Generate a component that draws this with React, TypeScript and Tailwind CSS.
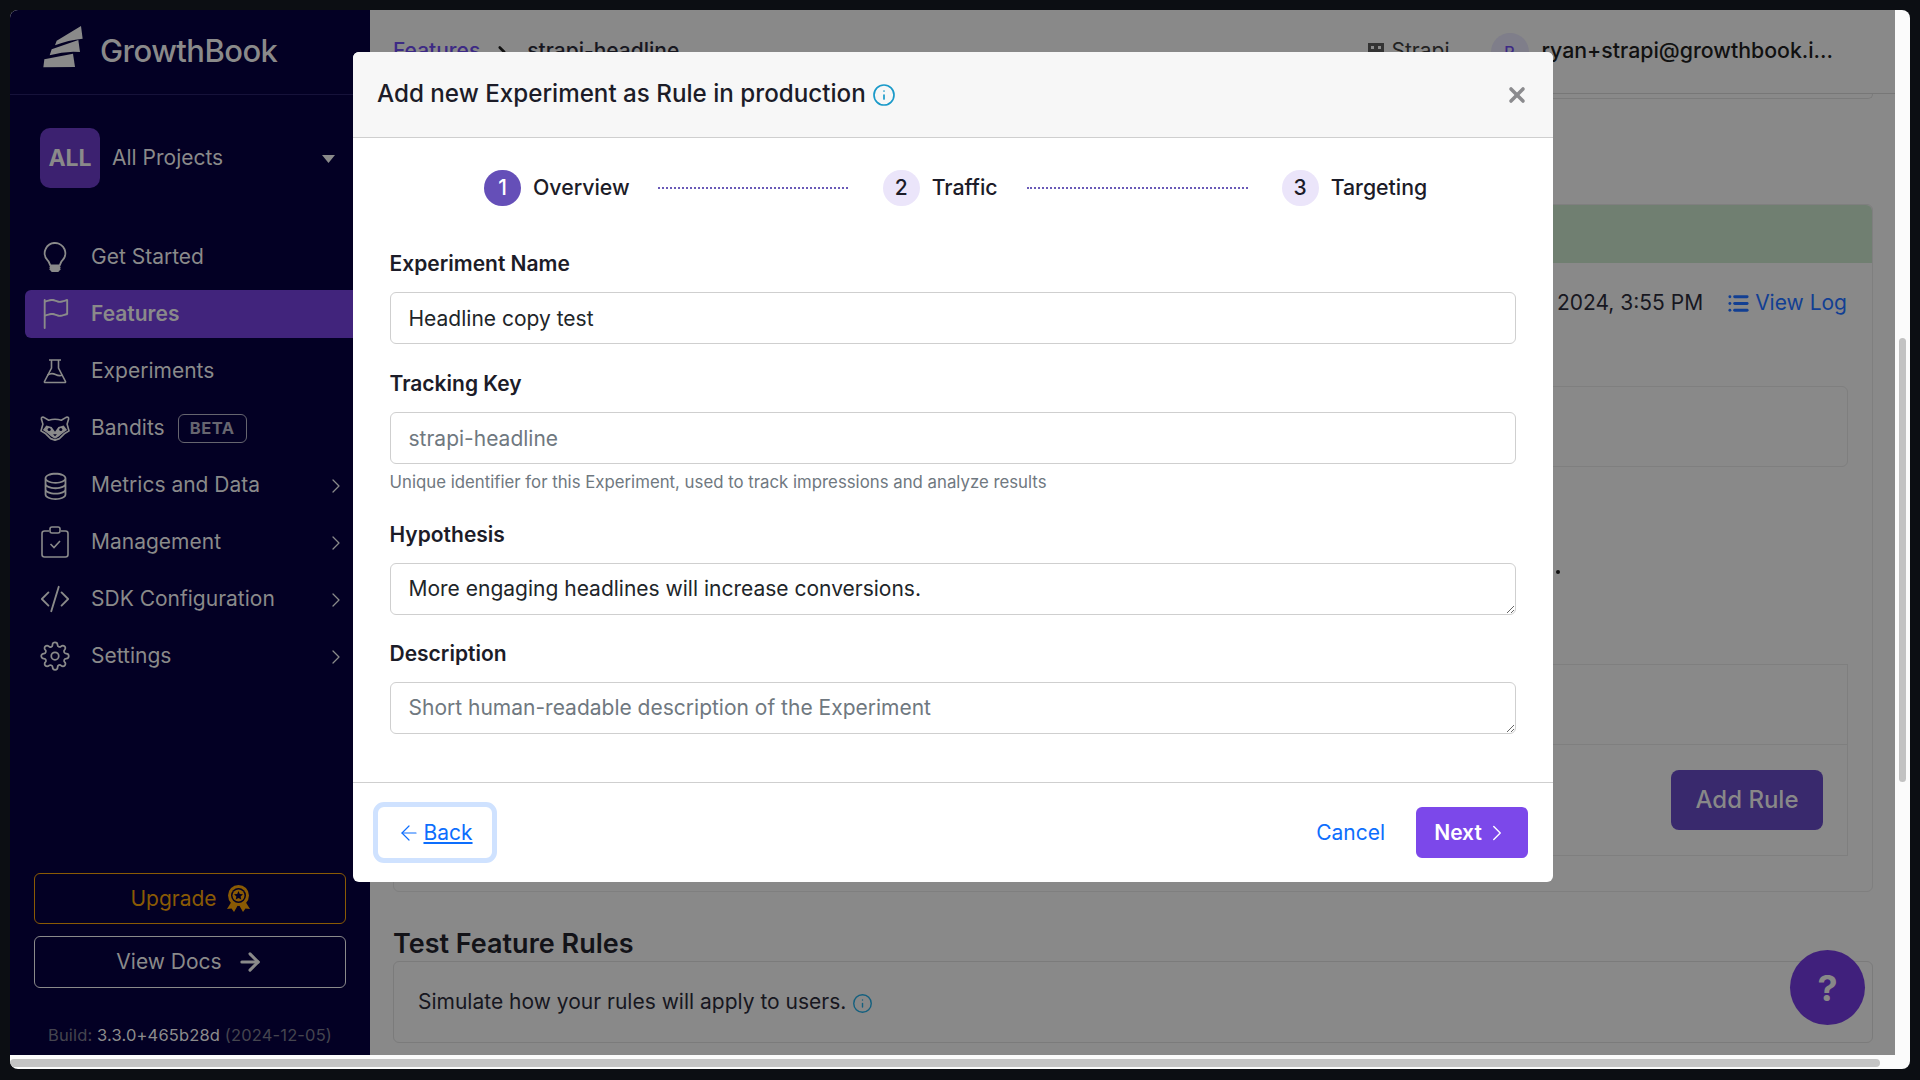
import React from "react";
import { ChevronRight, Info, X, ArrowLeft, ArrowRight, List } from "lucide-react";
import { BsLightbulb, BsFlag, BsDatabase, BsCodeSlash } from "react-icons/bs";
import { FiSettings } from "react-icons/fi";

const font = { fontFamily: "Inter, 'Liberation Sans', sans-serif" };

function Logo() {
  return (
    <svg width="60" height="55" viewBox="0 0 180 165" fill="#8a8a8a" className="shrink-0 -mt-[9px]">
      <path d="M60 76 L65 62 L138 18 L143 56 Q100 60 60 76 Z" />
      <path d="M44 106 L50 88 L130 60 L135 96 Q90 92 44 106 Z" />
      <path d="M25 142 L28 118 L114 101 L120 141 Z" />
    </svg>
  );
}

function Flask() {
  return (
    <svg width="26" height="26" viewBox="0 0 26 26" fill="none" stroke="#8a8a8a" strokeWidth="1.6">
      <path d="M7 2h12M9.500 2v8L2.500 23.500q-.4 1 .8 1h19.400q1.200 0 .8-1L16.500 10V2" />
      <path d="M5.500 17q4-2.500 8-.5t7 .5" />
    </svg>
  );
}

function Raccoon() {
  return (
    <svg width="31" height="26" viewBox="7 9 31 26" fill="none" stroke="#8a8a8a" strokeWidth="1.7">
      <path d="M11 11Q8 10 8.500 13L10 18L8 25L13 28L18 33L22.500 34.500L27 33L32 28L37 25L35 18L36.500 13Q37 10 34 11L29 14Q22.500 12 16 14Z" strokeLinejoin="round" />
      <path stroke="none" fill="#8a8a8a" d="M10 24L13.500 19.500L19 21L22.500 26L26 21L31.500 19.500L35 24L31 27L26 31L22.500 33L19 31L14 27Z" />
      <circle stroke="none" fill="#030024" cx="16.500" cy="23.500" r="1.600" />
      <circle stroke="none" fill="#030024" cx="28.500" cy="23.500" r="1.600" />
      <path stroke="none" fill="#030024" d="M20.500 28.500h4l-2 2z" />
    </svg>
  );
}

function Clipboard() {
  return (
    <svg width="28" height="32" viewBox="0 0 28 32" fill="none" stroke="#8a8a8a" strokeWidth="1.6">
      <path d="M8 5H3.500Q1 5 1 7.500v21Q1 31 3.500 31h21q2.500 0 2.500-2.500v-21Q27 5 24.500 5H20" />
      <rect x="9" y="1" width="10" height="6" rx="2" />
      <path d="M9.500 18l3.500 3.500 6-6.500" />
    </svg>
  );
}

function Ribbon() {
  return (
    <svg width="23" height="27" viewBox="0 0 23 27" fill="#8a5a04">
      <path d="M5 16L0 24l4.500-.5L7 27l4-7zM18 16l5 8-4.500-.5L16 27l-4-7z" />
      <circle cx="11.500" cy="10.500" r="10.500" />
      <circle cx="11.500" cy="10.500" r="7.500" fill="#030024" />
      <circle cx="11.500" cy="10.500" r="6" />
      <path fill="#030024" d="M11.500 6l1.300 3 3.200.3-2.400 2.100.7 3.100-2.800-1.600-2.800 1.600.7-3.100L7 9.300l3.200-.3z" />
    </svg>
  );
}

function NavItem({ icon, label, active, chevron, badge }: { icon: React.ReactNode; label: string; active?: boolean; chevron?: boolean; badge?: boolean }) {
  return (
    <div className={`flex items-center h-12 ml-[15px] pl-[15px] pr-[22px] rounded-l-md ${active ? "bg-[#41247c] font-semibold" : ""}`}>
      <span className="w-[30px] flex justify-center shrink-0 text-[#8a8a8a]">{icon}</span>
      <span className="ml-[21px] text-[21px] text-[#8a8a8a]">{label}</span>
      {badge && (
        <span className="ml-[13px] mt-[1px] h-[29px] w-[69px] flex items-center justify-center rounded-md border border-[#66656f] text-[#66656f] text-[16.500px] font-bold tracking-[0.5px]">BETA</span>
      )}
      {chevron && <ChevronRight className="ml-auto mt-[2px] text-[#8a8a8a]" size={24} strokeWidth={1.3} />}
    </div>
  );
}

function Sidebar() {
  return (
    <aside className="w-[360px] shrink-0 bg-[#030024] flex flex-col pb-[6px]">
      <div className="h-[85px] shrink-0 border-b border-[#16123a] flex items-center pl-[25px]">
        <Logo />
        <span className="ml-[5px] -mt-[2px] text-[31px] font-medium text-[#8a8a8a] tracking-[-0.55px]">GrowthBook</span>
      </div>
      <div className="flex items-center mt-[33px] ml-[30px] mr-[35px]">
        <div className="w-[60px] h-[60px] rounded-[10px] bg-[#3c2170] flex items-center justify-center text-[#8a8a8a] text-[23px] font-bold">ALL</div>
        <span className="ml-[12px] text-[21px] text-[#8a8a8a]">All Projects</span>
        <svg className="ml-auto mt-[2px]" width="13" height="8" viewBox="0 0 13 8" fill="#8a8a8a"><path d="M0 0h13L6.500 8z" /></svg>
      </div>
      <nav className="flex flex-col gap-[9px] mt-[45px]">
        <NavItem icon={<BsLightbulb size={32} />} label="Get Started" />
        <NavItem icon={<BsFlag size={32} />} label="Features" active />
        <NavItem icon={<Flask />} label="Experiments" />
        <NavItem icon={<Raccoon />} label="Bandits" badge />
        <NavItem icon={<BsDatabase size={29} />} label="Metrics and Data" chevron />
        <NavItem icon={<Clipboard />} label="Management" chevron />
        <NavItem icon={<BsCodeSlash size={32} />} label="SDK Configuration" chevron />
        <NavItem icon={<FiSettings size={32} strokeWidth={1.4} />} label="Settings" chevron />
      </nav>
      <div className="mt-auto mx-[24px] flex flex-col gap-[12px]">
        <div className="h-[51px] rounded-md border border-[#8a5a04] flex items-center justify-center text-[#8a5a04] text-[21px] gap-[10px]">
          Upgrade <Ribbon />
        </div>
        <div className="h-[52px] rounded-md border border-[#8a8a8a] flex items-center justify-center text-[#8a8a8a] text-[21px] gap-[14px]">
          View Docs <ArrowRight size={28} strokeWidth={2.6} />
        </div>
      </div>
      <div className="mt-[35px] mb-[2px] text-center text-[16.500px] text-[#45454f] tracking-[0.15px] leading-[24px]">
        Build: <span className="text-[#8c8c8c]">3.3.0+465b28d</span> (2024-12-05)
      </div>
    </aside>
  );
}

function MainBehind() {
  return (
    <main className="flex-1 min-w-0 bg-[#898989] flex flex-col overflow-hidden">
      <header className="h-[84px] shrink-0 border-b border-[#777] flex items-center pl-[23px] pr-[62px] text-[21px]">
        <span className="text-[#3d2a85] font-medium underline mb-[2px]">Features</span>
        <ChevronRight size={18} strokeWidth={3.5} className="ml-[13px] text-[#111]" />
        <span className="ml-[16px] text-[#17171f] font-medium mb-[2px]">strapi-headline</span>
        <div className="ml-auto flex items-center text-[#222]">
          <svg width="16" height="18" viewBox="0 0 16 18" fill="#333"><path d="M0 0h16v18H0zM3 3v3h3V3zM10 3v3h3V3zM3 9v3h3V9zM10 9v3h3V9z" fillRule="evenodd" /></svg>
          <span className="ml-[8px] mb-[2px]">Strapi</span>
          <div className="ml-[41px] w-[38px] h-[38px] rounded-full bg-[#7f7e8a] flex items-center justify-center text-[#3d2a85] text-[16px] font-medium">R</div>
          <span className="ml-[13px] mb-[2px] text-[#111] font-medium text-[21.300px]">ryan+strapi@growthbook.i...</span>
        </div>
      </header>
      <div className="pl-[23px] pr-[22px] flex flex-col flex-1">
        <div className="h-[5px] border-x border-b border-[#7b7b7b] rounded-b-md shrink-0" />
        <div className="mt-[105px] border border-[#7f7f7f] rounded-md h-[688px] shrink-0 flex flex-col">
          <div className="h-[58px] bg-[#707f71] rounded-t-md shrink-0" />
          <div className="flex items-center justify-end h-[80px] pr-[25px] text-[21px]">
            <span className="text-[#17171f]">Dec 5, 2024, 3:55 PM</span>
            <span className="ml-[24px] flex items-center gap-[5px] text-[#123f93]"><List size={23} strokeWidth={3} />View Log</span>
          </div>
          <div className="h-[81px] mr-[24px] ml-[100px] border border-[#7f7f7f] rounded-md mt-[43px] shrink-0" />
          <div className="h-[4px] w-[4px] rounded-full bg-[#111] ml-[1162px] mt-[103px] shrink-0" />
          <div className="mr-[24px] ml-[100px] mt-[90px] h-[192px] border border-[#7f7f7f] flex flex-col shrink-0">
            <div className="h-[80px] border-b border-[#7f7f7f]" />
            <div className="flex-1 flex items-center justify-end pr-[24px]">
              <div className="w-[152px] h-[60px] rounded-lg bg-[#39296d] text-[#888] flex items-center justify-center text-[24px] font-medium">Add Rule</div>
            </div>
          </div>
        </div>
        <h2 className="mt-[37px] text-[27px] leading-[30px] font-semibold text-[#131318] h-[32px] shrink-0">Test Feature Rules</h2>
        <div className="h-[82px] border border-[#7b7b7b] rounded-md flex items-center pl-[24px] text-[21px] text-[#17171f] shrink-0">
          Simulate how your rules will apply to users.
          <Info size={21} className="ml-[6px] mt-[2px] text-[#14607f]" strokeWidth={1.6} />
        </div>
      </div>
    </main>
  );
}

function Step({ n, label, active }: { n: number; label: string; active?: boolean }) {
  return (
    <div className="flex items-center shrink-0">
      <div className={`w-[37px] h-[36px] rounded-full flex items-center justify-center text-[21px] font-medium ${active ? "bg-[#654fb8] text-white" : "bg-[#ebe5fa] text-[#1c1c28]"}`}>{n}</div>
      <span className="ml-[12px] text-[21.300px] font-medium text-[#1c1c28]">{label}</span>
    </div>
  );
}

function Field({ label, value, placeholder, area, hint, mt }: { label: string; value?: string; placeholder?: string; area?: boolean; hint?: string; mt: string }) {
  const cls = "block w-full h-[52px] border border-[#cfcfcf] rounded-md px-[18px] text-[21px] text-[#212529] placeholder:text-[#6f7880] outline-none leading-[30px] py-[10px]";
  return (
    <div className={mt}>
      <label className="block text-[21px] font-semibold text-[#1c1c28] leading-[28px] mb-[14px]">{label}</label>
      {area ? (
        <textarea readOnly rows={1} className={cls} value={value ?? ""} placeholder={placeholder} />
      ) : (
        <input readOnly className={cls} value={value ?? ""} placeholder={placeholder} />
      )}
      {hint && <div className="mt-[6px] text-[16.800px] leading-[24px] text-[#6f7880]">{hint}</div>}
    </div>
  );
}

function Modal() {
  return (
    <div className="absolute left-[343px] top-[42px] w-[1200px] h-[830px] bg-white rounded-md flex flex-col overflow-hidden">
      <div className="h-[86px] shrink-0 bg-[#f7f7f7] border-b border-[#cfcfcf] flex items-center pl-[24px] pr-[24px]">
        <span className="text-[24.200px] font-medium text-[#1c1c28]">Add new Experiment as Rule in production</span>
        <Info size={24} className="ml-[6px] mt-[1px] text-[#1b9ac9]" strokeWidth={1.7} />
        <X size={24} strokeWidth={3.6} className="ml-auto text-[#8b8b8e]" />
      </div>
      <div className="flex-1 pl-[36.500px] pr-[37px]">
        <div className="flex items-center pt-[32px] pl-[94.500px]">
          <Step n={1} label="Overview" active />
          <div className="ml-[28px] w-[190px] border-t-2 border-dotted border-[#6a5ab8]" />
          <div className="ml-[35px]"><Step n={2} label="Traffic" /></div>
          <div className="ml-[29px] w-[221px] border-t-2 border-dotted border-[#6a5ab8]" />
          <div className="ml-[34px]"><Step n={3} label="Targeting" /></div>
        </div>
        <Field mt="mt-[44px]" label="Experiment Name" value="Headline copy test" />
        <Field mt="mt-[26px]" label="Tracking Key" placeholder="strapi-headline" hint="Unique identifier for this Experiment, used to track impressions and analyze results" />
        <Field mt="mt-[27px]" label="Hypothesis" value="More engaging headlines will increase conversions." area />
        <Field mt="mt-[25px]" label="Description" placeholder="Short human-readable description of the Experiment" area />
      </div>
      <div className="h-[100px] shrink-0 border-t border-[#cfcfcf] flex items-center pl-[25px] pr-[25px]">
        <div className="h-[51px] w-[114px] rounded-md outline-[5px] outline-[#cfe2ff] flex items-center justify-center gap-[2px] text-[#0d6efd] text-[21px]">
          <ArrowLeft size={24} strokeWidth={1.2} />
          <span className="underline">Back</span>
        </div>
        <span className="ml-auto text-[#0d6efd] text-[21px]">Cancel</span>
        <div className="ml-[31px] h-[51px] w-[112px] rounded-md bg-[#7c48ea] flex items-center justify-center gap-[2px] text-white text-[21px] font-semibold">
          Next <ChevronRight size={26} strokeWidth={1.3} />
        </div>
      </div>
    </div>
  );
}

export default function App() {
  return (
    <div style={font} className="h-screen w-screen overflow-hidden bg-[#0c0e13] pt-[10px] pl-[10px] pr-[10px] pb-[11px]">
      <div className="relative h-full w-full bg-[#fbfbfb] rounded-lg overflow-hidden flex flex-col">
        <div className="flex-1 min-h-0 flex">
          <div className="flex-1 min-w-0 flex">
            <Sidebar />
            <MainBehind />
          </div>
          <div className="w-[15px] shrink-0 relative">
            <div className="absolute left-[4px] right-[4px] top-[328px] h-[444px] rounded-full bg-[#c2c2c2]" />
          </div>
        </div>
        <div className="h-[14px] shrink-0 flex items-center pt-[1px]">
          <div className="h-[8px] w-[1870px] rounded-full bg-[#c4c4c4]" />
        </div>
        <Modal />
        <div className="absolute left-[1780px] top-[940px] w-[75px] h-[75px] rounded-full bg-[#40207c] flex items-center justify-center text-[#888] text-[36px] font-bold">?</div>
      </div>
    </div>
  );
}
